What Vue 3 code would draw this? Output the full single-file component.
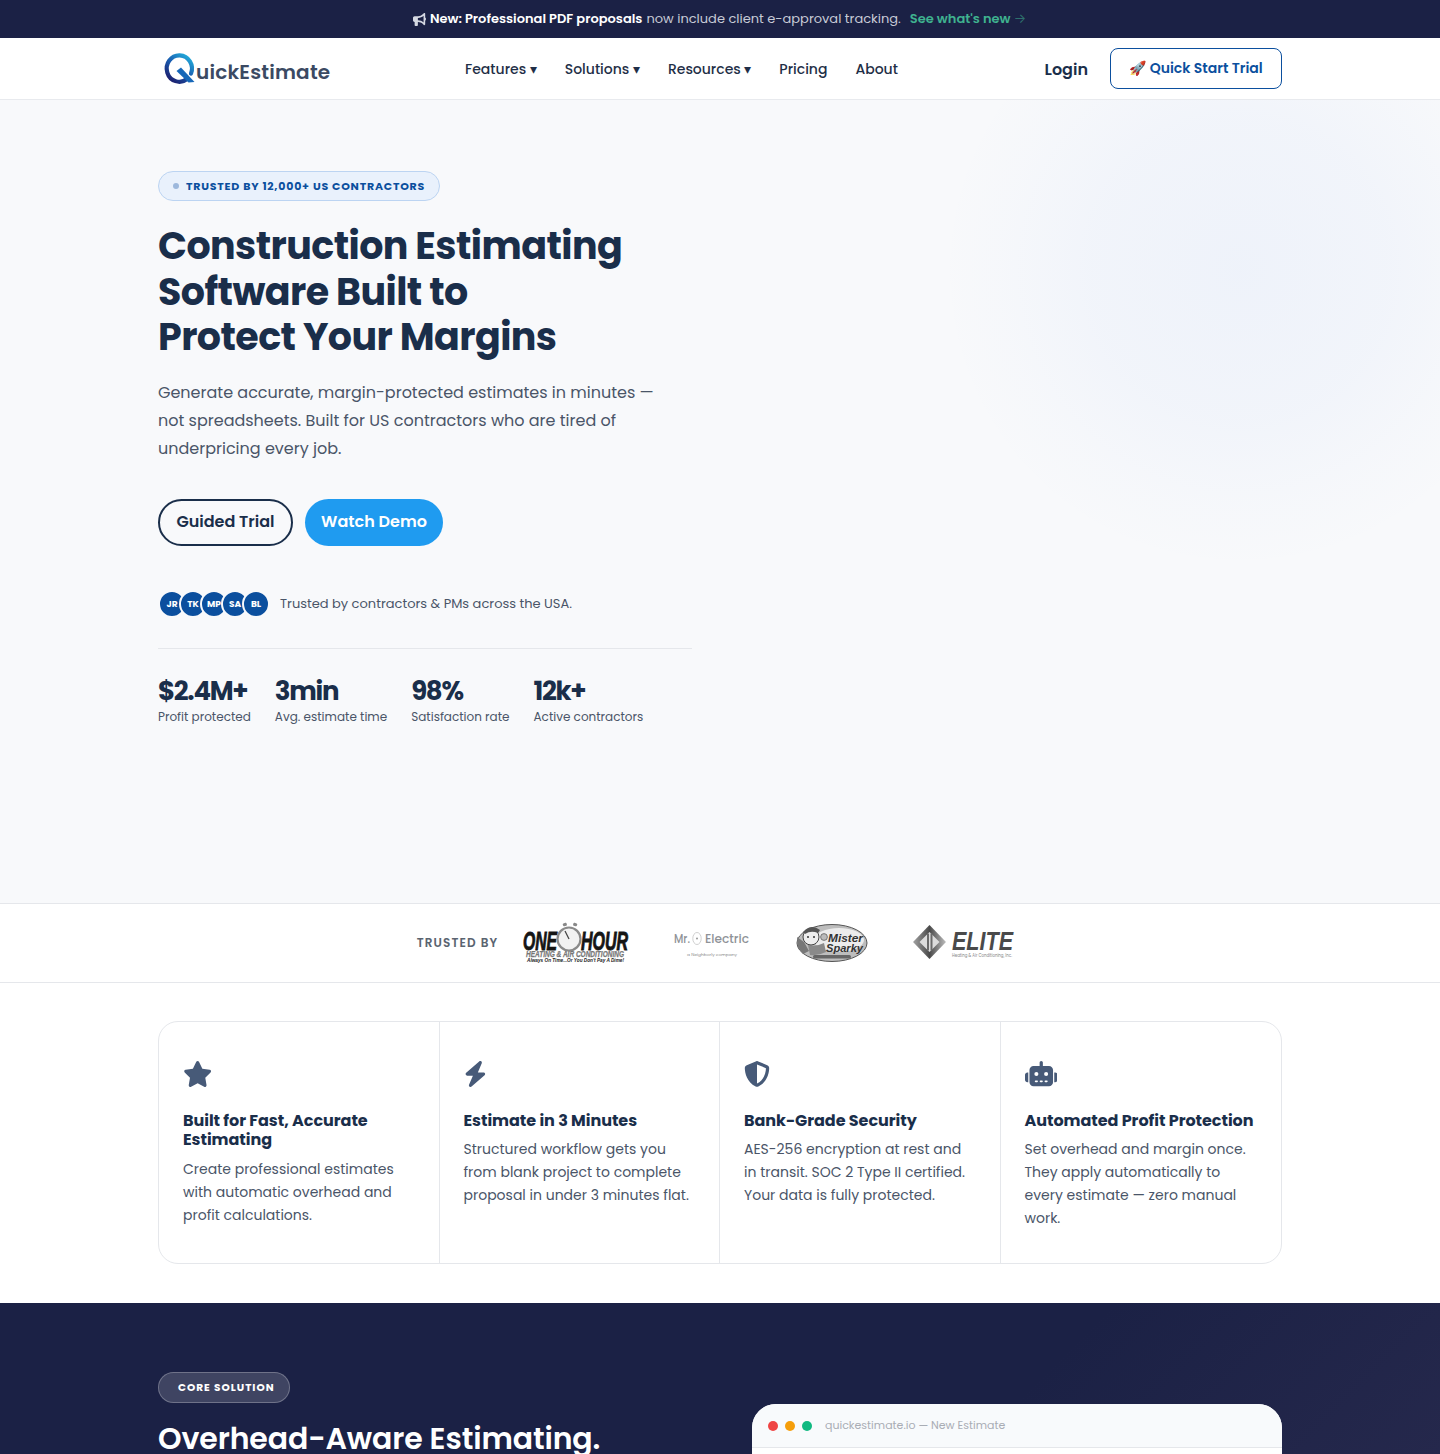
<script setup>
const navItems = [
  { label: 'Features', caret: true },
  { label: 'Solutions', caret: true },
  { label: 'Resources', caret: true },
  { label: 'Pricing', caret: false },
  { label: 'About', caret: false }
]
const avatars = ['JR', 'TK', 'MP', 'SA', 'BL']
const stats = [
  { value: '$2.4M+', label: 'Profit protected' },
  { value: '3min', label: 'Avg. estimate time' },
  { value: '98%', label: 'Satisfaction rate' },
  { value: '12k+', label: 'Active contractors' }
]
const features = [
  {
    title: 'Built for Fast, Accurate Estimating',
    text: 'Create professional estimates with automatic overhead and profit calculations.',
    viewBox: '0 0 576 512',
    width: 29.25,
    path: 'M316.9 18C311.6 7 300.4 0 288.1 0s-23.4 7-28.8 18L195 150.3 51.4 171.5c-12 1.8-22 10.2-25.7 21.7s-.7 24.2 7.9 32.7L137.8 329 113.2 474.7c-2 12 3 24.2 12.9 31.3s23 8 33.8 2.3l128.3-68.5 128.3 68.5c10.8 5.7 23.9 4.9 33.8-2.3s14.9-19.3 12.9-31.3L438.5 329 542.7 225.9c8.6-8.5 11.7-21.2 7.9-32.7s-13.7-19.9-25.7-21.7L381.2 150.3 316.9 18z'
  },
  {
    title: 'Estimate in 3 Minutes',
    text: 'Structured workflow gets you from blank project to complete proposal in under 3 minutes flat.',
    viewBox: '0 0 448 512',
    width: 22.75,
    path: 'M349.4 44.6c5.9-13.7 1.5-29.7-10.6-38.5s-28.6-8-39.9 1.8l-256 224c-10 8.8-13.6 22.9-8.9 35.3S50.7 288 64 288H175.5L98.6 467.4c-5.9 13.7-1.5 29.7 10.6 38.5s28.6 8 39.9-1.8l256-224c10-8.8 13.6-22.9 8.9-35.3s-16.6-20.7-30-20.7H272.5L349.4 44.6z'
  },
  {
    title: 'Bank-Grade Security',
    text: 'AES-256 encryption at rest and in transit. SOC 2 Type II certified. Your data is fully protected.',
    viewBox: '0 0 512 512',
    width: 26,
    path: 'M256 0c4.6 0 9.2 1 13.4 2.9L457.7 82.8c22 9.3 38.4 31 38.3 57.2c-.5 99.2-41.3 280.7-213.6 363.2c-16.7 8-36.1 8-52.8 0C57.3 420.7 16.5 239.2 16 140c-.1-26.2 16.3-47.9 38.3-57.2L242.7 2.9C246.8 1 251.4 0 256 0zm0 66.8V444.8C394 378 431.1 230.1 432 141.4L256 66.8l0 0z'
  },
  {
    title: 'Automated Profit Protection',
    text: 'Set overhead and margin once. They apply automatically to every estimate — zero manual work.',
    viewBox: '0 0 640 512',
    width: 32.5,
    path: 'M320 0c17.7 0 32 14.3 32 32V96H472c44.2 0 80 35.8 80 80V416c0 44.2-35.8 80-80 80H168c-44.2 0-80-35.8-80-80V176c0-44.2 35.8-80 80-80H288V32c0-17.7 14.3-32 32-32zM208 384c-8.8 0-16 7.2-16 16s7.2 16 16 16h32c8.8 0 16-7.2 16-16s-7.2-16-16-16H208zm96 0c-8.8 0-16 7.2-16 16s7.2 16 16 16h32c8.8 0 16-7.2 16-16s-7.2-16-16-16H304zm96 0c-8.8 0-16 7.2-16 16s7.2 16 16 16h32c8.8 0 16-7.2 16-16s-7.2-16-16-16H400zM264 256a40 40 0 1 0 -80 0 40 40 0 1 0 80 0zm152 40a40 40 0 1 0 0-80 40 40 0 1 0 0 80zM48 224H64V416H48c-26.5 0-48-21.5-48-48V272c0-26.5 21.5-48 48-48zm544 0c26.5 0 48 21.5 48 48v96c0 26.5-21.5 48-48 48H576V224h16z'
  }
]
</script>

<template>
  <div class="page">
    <div class="announce">
      <svg class="horn" viewBox="0 0 512 512" aria-hidden="true"><path d="M480 32c0-12.9-7.8-24.6-19.8-29.6s-25.7-2.2-34.9 6.9L381.7 53c-48 48-113.1 75-181 75H192 160 64c-35.3 0-64 28.7-64 64v96c0 35.3 28.7 64 64 64l0 128c0 17.7 14.3 32 32 32h64c17.7 0 32-14.3 32-32V352l8.7 0c67.9 0 133 27 181 75l43.6 43.6c9.2 9.2 22.9 11.9 34.9 6.9s19.8-16.6 19.8-29.6V300.4c18.6-8.8 32-32.5 32-60.4s-13.4-51.6-32-60.4V32zm-64 76.7V240 371.3C357.2 317.8 280.5 288 200.7 288H192V192h8.7c79.8 0 156.5-29.8 215.3-83.3z" fill="#d5d8e2"/></svg>
      <strong>New: Professional PDF proposals</strong>
      <span class="announce-rest">now include client e-approval tracking.</span>
      <a class="announce-link">See what's new <span class="arrow">→</span></a>
    </div>

    <header class="nav">
      <div class="nav-inner">
        <div class="logo">
          <svg class="logo-q" viewBox="0 0 32 32" aria-hidden="true">
            <defs>
              <linearGradient id="qg" x1="0.85" y1="0.05" x2="0.2" y2="0.95">
                <stop offset="0" stop-color="#22a7d8"/>
                <stop offset="0.5" stop-color="#1a5cb0"/>
                <stop offset="1" stop-color="#1c2372"/>
              </linearGradient>
            </defs>
            <path d="M23 28A12.6 13.2 0 1 1 27 22.5" fill="none" stroke="url(#qg)" stroke-width="4.2" stroke-linecap="round"/>
            <path d="M17 16.5 L30.5 31 L24.5 31.5 L12.5 20 Z" fill="#1667b8"/>
          </svg>
          <span class="logo-text">uickEstimate</span>
        </div>
        <nav class="links">
          <a v-for="item in navItems" :key="item.label" class="link">{{ item.label }}<span v-if="item.caret" class="caret">▾</span></a>
        </nav>
        <div class="actions">
          <a class="login">Login</a>
          <a class="trial">🚀 Quick Start Trial</a>
        </div>
      </div>
    </header>

    <section class="hero">
      <div class="hero-col">
        <div class="pill"><span class="pill-dot"></span>TRUSTED BY 12,000+ US CONTRACTORS</div>
        <h1>Construction Estimating<br>Software Built to<br>Protect Your Margins</h1>
        <p class="lead">Generate accurate, margin-protected estimates in minutes — not spreadsheets. Built for US contractors who are tired of underpricing every job.</p>
        <div class="cta">
          <a class="btn btn-outline">Guided Trial</a>
          <a class="btn btn-blue">Watch Demo</a>
        </div>
        <div class="proof">
          <div class="avatars">
            <span v-for="a in avatars" :key="a" class="avatar">{{ a }}</span>
          </div>
          <span class="proof-text">Trusted by contractors &amp; PMs across the USA.</span>
        </div>
        <div class="stats">
          <div v-for="s in stats" :key="s.label" class="stat">
            <div class="stat-value">{{ s.value }}</div>
            <div class="stat-label">{{ s.label }}</div>
          </div>
        </div>
      </div>
    </section>

    <section class="strip">
      <span class="strip-label">TRUSTED BY</span>
      <svg class="brand" width="107" height="40" viewBox="0 0 107 40" role="img" aria-label="One Hour Heating and Air Conditioning">
        <rect x="41" y="0" width="4" height="3" rx="1" fill="#888" transform="rotate(-18 43 2)"/>
        <rect x="51" y="0" width="4" height="3" rx="1" fill="#888" transform="rotate(18 53 2)"/>
        <text x="1" y="27" class="b-one" textLength="34" lengthAdjust="spacingAndGlyphs">ONE</text>
        <text x="59" y="27" class="b-one" textLength="47" lengthAdjust="spacingAndGlyphs">HOUR</text>
        <circle cx="47" cy="16" r="11.5" fill="#f2f2f2" stroke="#8a8a8a" stroke-width="2.2"/>
        <path d="M47 16 L43 8" stroke="#444" stroke-width="1.2"/>
        <text x="4" y="34" class="b-heat" textLength="98" lengthAdjust="spacingAndGlyphs">HEATING &amp; AIR CONDITIONING</text>
        <text x="5" y="39" class="b-tag" textLength="97" lengthAdjust="spacingAndGlyphs">Always On Time...Or You Don't Pay A Dime!</text>
      </svg>
      <svg class="brand" width="76" height="40" viewBox="0 0 76 40" role="img" aria-label="Mr. Electric">
        <text x="0" y="20" class="b-mr" textLength="16" lengthAdjust="spacingAndGlyphs">Mr.</text>
        <ellipse cx="23" cy="15.5" rx="4.2" ry="6" fill="none" stroke="#c4c4c4" stroke-width="0.8"/>
        <circle cx="23" cy="15.5" r="1" fill="#999"/>
        <text x="31" y="20" class="b-mr" textLength="44" lengthAdjust="spacingAndGlyphs">Electric</text>
        <text x="13" y="33" class="b-mr-sub" textLength="50" lengthAdjust="spacingAndGlyphs">a Neighborly company</text>
      </svg>
      <svg class="brand" width="73" height="40" viewBox="0 0 73 40" role="img" aria-label="Mister Sparky">
        <ellipse cx="37" cy="20" rx="35" ry="18.5" fill="#bdbdbd" stroke="#555" stroke-width="1"/>
        <ellipse cx="44" cy="17" rx="25" ry="12" fill="#ececec"/>
        <path d="M2 14 L9 19 L14 28 L8 31 L3 24 Z" fill="#777"/>
        <path d="M13 22 q8 2 16 -2 l2 9 q-8 4 -16 3 z" fill="#8a8a8a"/>
        <circle cx="16" cy="14" r="8" fill="#eee" stroke="#444" stroke-width="1"/>
        <path d="M8 9 q8 -9 17 -2 l-2 3 q-7 -3 -13 1 z" fill="#555"/>
        <circle cx="29" cy="14" r="3.4" fill="#bbb" stroke="#555" stroke-width=".7"/>
        <circle cx="13" cy="14" r="1" fill="#333"/><circle cx="19" cy="14" r="1" fill="#333"/>
        <text x="33" y="19" class="b-sp" textLength="35" lengthAdjust="spacingAndGlyphs">Mister</text>
        <text x="31" y="29" class="b-sp" textLength="37" lengthAdjust="spacingAndGlyphs">Sparky</text>
        <rect x="18" y="32" width="38" height="3.4" rx="1.7" fill="#666"/>
      </svg>
      <svg class="brand" width="101" height="40" viewBox="0 0 101 40" role="img" aria-label="Elite Heating and Air Conditioning">
        <defs>
          <linearGradient id="eg" x1="0" y1="0" x2="1" y2="0">
            <stop offset="0" stop-color="#a3a3a3"/><stop offset="0.5" stop-color="#4a4a4a"/><stop offset="1" stop-color="#bdbdbd"/>
          </linearGradient>
        </defs>
        <path d="M16.5 2 L33 19 L16.5 36 L0 19 Z" fill="url(#eg)"/>
        <path d="M16.5 9 L26.5 19 L16.5 29 L6.5 19 Z" fill="#dcdcdc"/>
        <path d="M14 10.5 h2 v17 h-2 z M17.5 10.5 h2 v17 h-2 z" fill="#6a6a6a"/>
        <text x="39" y="27" class="b-elite" textLength="61" lengthAdjust="spacingAndGlyphs">ELITE</text>
        <text x="39" y="33.5" class="b-elite-sub" textLength="60" lengthAdjust="spacingAndGlyphs">Heating &amp; Air Conditioning, Inc.</text>
      </svg>
    </section>

    <section class="features">
      <div class="feature-card">
        <div v-for="f in features" :key="f.title" class="feature">
          <svg class="f-icon" :width="f.width" height="26" :viewBox="f.viewBox" aria-hidden="true"><path :d="f.path"/></svg>
          <h3>{{ f.title }}</h3>
          <p>{{ f.text }}</p>
        </div>
      </div>
    </section>

    <section class="core">
      <div class="core-left">
        <span class="core-pill">CORE SOLUTION</span>
        <h2>Overhead-Aware Estimating.</h2>
      </div>
      <div class="window">
        <div class="window-bar">
          <span class="dot red"></span><span class="dot amber"></span><span class="dot green"></span>
          <span class="window-url">quickestimate.io — New Estimate</span>
        </div>
      </div>
    </section>
  </div>
</template>

<style>
html, body { margin: 0; background: #fff; }
</style>

<style scoped>
.page {
  width: 1440px;
  height: 1454px;
  overflow: hidden;
  font-family: Poppins, Inter, "Noto Sans", sans-serif;
  color: #1a2e4a;
}
a { cursor: pointer; }

.announce {
  height: 38px;
  background: #1b2145;
  color: #c7cad6;
  display: flex;
  align-items: center;
  justify-content: center;
  font-size: 13px;
  box-sizing: border-box;
  padding-right: 1px;
}
.horn { width: 13px; height: 13px; margin-right: 4px; }
.announce strong { color: #fff; font-weight: 600; margin-right: 4px; }
.announce-link { color: #3fb28f; font-weight: 600; margin-left: 9px; }
.arrow { font-weight: 400; opacity: .55; }

.nav { height: 62px; box-sizing: border-box; border-bottom: 1px solid #e8eaee; background: #fff; }
.nav-inner {
  width: 1124px;
  margin: 0 auto;
  height: 61px;
  display: grid;
  grid-template-columns: 307px 1fr auto;
  align-items: center;
}
.logo { display: flex; align-items: flex-end; padding-left: 6px; height: 32px; margin-top: -3px; }
.logo-q { width: 32px; height: 32px; flex: none; overflow: visible; }
.logo-text {
  font-size: 20px;
  font-weight: 600;
  color: #3b4a63;
  line-height: 24px;
  letter-spacing: .2px;
  margin-bottom: -1px;
}
.links { display: flex; gap: 28px; padding-top: 2px; }
.link { font-size: 14px; font-weight: 500; color: #1f2f47; white-space: nowrap; }
.caret { font-size: 14px; margin-left: 3.6px; }
.actions { display: flex; align-items: center; gap: 22px; }
.login { font-size: 16px; font-weight: 600; color: #1a2e4a; padding-top: 1px; }
.trial {
  width: 172px;
  height: 41px;
  box-sizing: border-box;
  border: 1.5px solid #0b4f9e;
  border-radius: 8px;
  display: flex;
  align-items: center;
  justify-content: center;
  font-size: 14px;
  font-weight: 600;
  color: #0b4f9e;
  margin-bottom: 1px;
  white-space: pre;
}

.hero {
  height: 803px;
  box-sizing: border-box;
  padding: 71px 158px 0;
  background:
    radial-gradient(circle 300px at 1240px 170px, rgba(60,120,235,.05), rgba(60,120,235,.035) 50%, rgba(60,120,235,.012) 80%, rgba(60,120,235,0) 100%),
    #f8f9fb;
}
.hero-col { width: 534px; }
.pill {
  display: inline-flex;
  align-items: center;
  height: 30px;
  box-sizing: border-box;
  padding: 0 14px;
  border: 1px solid #bcd4f2;
  border-radius: 15px;
  background: #e9f1fc;
  color: #0b4f9e;
  font-size: 11px;
  font-weight: 700;
  letter-spacing: .77px;
  vertical-align: top;
}
.pill-dot { width: 6px; height: 6px; border-radius: 50%; background: #9db8dc; margin-right: 7px; }
h1 {
  margin: 22px 0 0;
  font-size: 38px;
  line-height: 45.6px;
  font-weight: 700;
  letter-spacing: -.57px;
  color: #1a2e4a;
}
.lead {
  margin: 19.2px 0 0;
  width: 510px;
  font-size: 16px;
  line-height: 28px;
  color: #4a5568;
}
.cta { display: flex; gap: 12px; margin-top: 36.4px; }
.btn {
  height: 47px;
  box-sizing: border-box;
  border-radius: 24px;
  display: flex;
  align-items: center;
  justify-content: center;
  padding-bottom: 2px;
  font-size: 16px;
  font-weight: 600;
}
.btn-outline { width: 135px; border: 2px solid #1a2e4a; color: #1a2e4a; }
.btn-blue { width: 138px; background: #1f9bf0; color: #fff; }
.proof { display: flex; align-items: center; margin-top: 44px; height: 28px; }
.avatars { display: flex; }
.avatar {
  width: 28px;
  height: 28px;
  box-sizing: border-box;
  border: 2px solid #f8f9fb;
  border-radius: 50%;
  background: #0b4f9e;
  color: #fff;
  font-size: 9px;
  font-weight: 700;
  display: flex;
  align-items: center;
  justify-content: center;
  margin-left: -7px;
}
.avatar:first-child { margin-left: 0; }
.proof-text { margin-left: 10px; font-size: 13px; color: #4a5568; }
.stats {
  margin-top: 30px;
  border-top: 1px solid #e5e7eb;
  padding-top: 25px;
  display: flex;
  gap: 24px;
}
.stat-value { font-size: 26px; line-height: 34px; font-weight: 700; letter-spacing: -1.3px; color: #1a2e4a; }
.stat-label { font-size: 12px; line-height: 18px; color: #4a5568; white-space: nowrap; }

.strip {
  height: 80px;
  box-sizing: border-box;
  border-top: 1px solid #e5e7eb;
  border-bottom: 1px solid #e5e7eb;
  background: #fff;
  display: flex;
  align-items: center;
  justify-content: center;
  padding-right: 9px;
  gap: 45px;
}
.strip-label { font-size: 12px; font-weight: 600; letter-spacing: 1.1px; color: #5a6470; margin-right: -21px; white-space: nowrap; }
.brand { flex: none; display: block; overflow: visible; }
.b-one { font: italic 700 25px "Liberation Sans", sans-serif; fill: #151515; stroke: #151515; stroke-width: .9px; }
.b-heat { font: italic 700 8.5px "Liberation Sans", sans-serif; fill: #777; stroke: #777; stroke-width: .25px; }
.b-tag { font: italic 700 5.5px "Liberation Sans", sans-serif; fill: #222; }
.b-mr { font: 500 13px Poppins, Inter, sans-serif; fill: #8f9398; }
.b-mr-sub { font: 400 4px Poppins, Inter, sans-serif; fill: #888; }
.b-sp { font: italic 700 11.5px "Liberation Sans", sans-serif; fill: #333; }
.b-elite { font: italic 700 26px "Liberation Sans", sans-serif; fill: #4a4a4a; }
.b-elite-sub { font: 400 5px Poppins, Inter, sans-serif; fill: #888; }

.features { height: 320px; box-sizing: border-box; padding: 38px 158px 0; background: #fff; }
.feature-card {
  height: 243px;
  box-sizing: border-box;
  border: 1px solid #e5e7eb;
  border-radius: 20px;
  display: grid;
  grid-template-columns: repeat(4, 1fr);
}
.feature { padding: 39px 24px 0; border-right: 1px solid #e5e7eb; min-width: 0; }
.feature:last-child { border-right: 0; }
.f-icon { display: block; height: 26px; fill: #475a78; }
.feature h3 {
  margin: 24px 0 0;
  font-size: 16px;
  line-height: 19.2px;
  font-weight: 700;
  letter-spacing: -.05px;
  color: #1a2e4a;
}
.feature p { margin: 8.2px 0 0; font-size: 14px; line-height: 23px; color: #4a5568; }

.core {
  height: 151px;
  overflow: hidden;
  box-sizing: border-box;
  background: linear-gradient(135deg, #1b2145 70%, #25284c 100%);
  padding: 69px 158px 0;
  display: flex;
  justify-content: space-between;
  align-items: flex-start;
}
.core-left { width: 534px; }
.core-pill {
  display: inline-flex;
  align-items: center;
  height: 31px;
  box-sizing: border-box;
  padding: 0 14px 0 19px;
  border: 1px solid rgba(255,255,255,.25);
  border-radius: 16px;
  background: rgba(255,255,255,.16);
  color: #fff;
  font-size: 10.5px;
  font-weight: 700;
  letter-spacing: 1px;
}
.core h2 {
  margin: 15px 0 0;
  font-size: 30px;
  line-height: 42px;
  font-weight: 600;
  letter-spacing: -.13px;
  color: #fff;
  white-space: nowrap;
}
.window {
  width: 530px;
  height: 120px;
  margin-top: 32px;
  background: #fff;
  border-radius: 24px 24px 0 0;
  overflow: hidden;
}
.window-bar {
  height: 43px;
  background: #f8fafc;
  border-bottom: 1px solid #e5e7eb;
  display: flex;
  align-items: center;
  padding-left: 16px;
  gap: 5px;
}
.dot { width: 10px; height: 10px; border-radius: 50%; margin-right: 2px; }
.red { background: #ef4444; }
.amber { background: #f59e0b; }
.green { background: #10b981; }
.window-url { margin-left: 6px; font-size: 11px; color: #a9adb5; }
</style>
